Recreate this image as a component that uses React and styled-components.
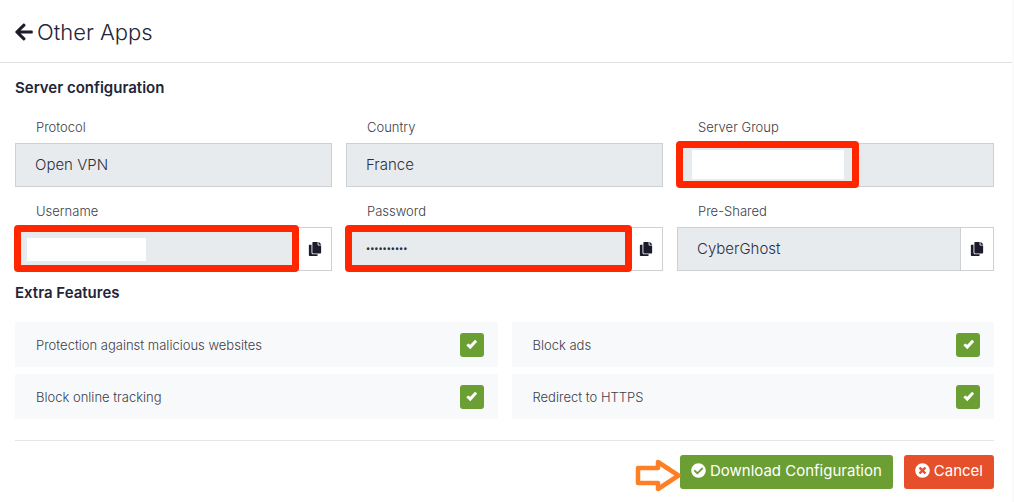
import React from "react";
import styled, { createGlobalStyle } from "styled-components";
import {
  FaArrowLeft,
  FaCheckCircle,
  FaCopy,
  FaTimesCircle,
} from "react-icons/fa";

const GlobalStyle = createGlobalStyle`
  * {
    box-sizing: border-box;
  }
  body {
    margin: 0;
    background-color: #fafafa;
    color: #212537;
    font-family: Inter, "Open Sans", sans-serif;
    font-weight: 300;
  }
`;

const Card = styled.main`
  min-height: 100vh;
  margin-right: 2px;
  background-color: white;
`;

const Header = styled.header`
  display: flex;
  align-items: center;
  gap: 3px;
  padding: 17px 15px 15px 14px;
  border-bottom: 1px solid #dee0e2;

  a {
    display: flex;
    color: #1b1b2b;
    font-size: 20px;
  }
  h1 {
    margin: 0;
    font-size: 22px;
    font-weight: 300;
    line-height: 30px;
  }
`;

const Content = styled.form`
  padding: 15px 18px 0 15px;
`;

const SectionTitle = styled.h2`
  margin: 0;
  font-size: 15px;
  font-weight: 600;
  line-height: 20px;
`;

const FieldGrid = styled.div`
  display: grid;
  grid-template-columns: repeat(3, 1fr);
  column-gap: 14px;
  padding: 5px 0 12px;
`;

const FieldLabel = styled.label`
  display: block;
  padding: 14px 21px 6px;
  font-size: 13px;
  line-height: 20px;
  color: #3c4048;
`;

const Control = styled.div`
  position: relative;
  display: flex;
  height: 44px;
  border: 1px solid #ced1d4;
`;

const TextInput = styled.input`
  flex: 1;
  min-width: 0;
  padding: 0 19px 2px;
  border: 0;
  background-color: #e8ebee;
  color: #2b2f3d;
  font-family: inherit;
  font-size: 15px;
  font-weight: 300;

  &[type="password"] {
    font-family: "Noto Sans", sans-serif;
    font-size: 11px;
    font-weight: 400;
  }
`;

const CopyButton = styled.button`
  display: flex;
  align-items: center;
  justify-content: center;
  width: 33px;
  padding: 0;
  border: 0;
  border-left: 1px solid #ced1d4;
  background-color: white;
  color: #1b1b2b;
  font-size: 14px;
  cursor: pointer;
`;

const Highlight = styled.span`
  position: absolute;
  top: -3px;
  bottom: -2px;
  left: -2px;
  right: ${(props) => props.$right};
  border: 7px solid #ff2600;
  border-radius: 4px;
  pointer-events: none;
`;

const Redaction = styled.span`
  position: absolute;
  top: ${(props) => props.$top};
  left: ${(props) => props.$left};
  width: ${(props) => props.$width};
  height: ${(props) => props.$height};
  background-color: white;
`;

const FeatureGrid = styled.div`
  display: grid;
  grid-template-columns: repeat(2, 1fr);
  gap: 7px 14px;
  padding: 19px 0 21px;
`;

const Feature = styled.label`
  display: flex;
  align-items: center;
  justify-content: space-between;
  height: 45px;
  padding: 0 14px 0 21px;
  background-color: #f8f9fb;
  color: #3c4048;
  font-size: 13px;
`;

const CheckCell = styled.span`
  display: grid;
  place-items: center;

  input,
  svg {
    grid-area: 1 / 1;
  }
  input {
    appearance: none;
    width: 24px;
    height: 24px;
    margin: 0;
    border-radius: 3px;
    background-color: #d5d9dd;
    cursor: pointer;
  }
  input:checked {
    background-color: #6b9f33;
  }
  svg {
    pointer-events: none;
  }
`;

const Footer = styled.footer`
  display: flex;
  justify-content: flex-end;
  gap: 11px;
  padding: 14px 0 13px;
  border-top: 1px solid #e3e5e7;
`;

const DownloadSlot = styled.div`
  position: relative;
`;

const ActionButton = styled.button`
  display: flex;
  align-items: center;
  gap: 4px;
  height: 34px;
  padding: 0 11px 3px;
  border: 0;
  border-radius: 3px;
  background-color: ${(props) => props.$color};
  color: white;
  font-family: Inter, "Open Sans", sans-serif;
  font-size: 15px;
  cursor: pointer;
`;

const Pointer = styled.svg`
  position: absolute;
  top: 3px;
  right: calc(100% - 2px);
  pointer-events: none;
`;

const fields = [
  { id: "protocol", label: "Protocol", value: "Open VPN" },
  { id: "country", label: "Country", value: "France" },
  {
    id: "group",
    label: "Server Group",
    value: "",
    highlight: "134px",
    redaction: { $top: "6px", $left: "14px", $width: "152px", $height: "29px" },
  },
  {
    id: "username",
    label: "Username",
    value: "",
    copy: true,
    highlight: "32px",
    redaction: { $top: "10px", $left: "11px", $width: "119px", $height: "23px" },
  },
  {
    id: "password",
    label: "Password",
    type: "password",
    value: "abcdefghij",
    copy: true,
    highlight: "30px",
  },
  { id: "preshared", label: "Pre-Shared", value: "CyberGhost", copy: true },
];

const features = [
  "Protection against malicious websites",
  "Block ads",
  "Block online tracking",
  "Redirect to HTTPS",
];

function Tick() {
  return (
    <svg width="13" height="13" viewBox="0 0 12 12">
      <path d="M1.200 6.800L3 5L4.800 6.300L9.300 1.500L11.200 3.400L4.900 10.400Z" fill="white" />
    </svg>
  );
}

function Field({ id, label, value, type = "text", copy, highlight, redaction }) {
  return (
    <div>
      <FieldLabel htmlFor={id}>{label}</FieldLabel>
      <Control>
        <TextInput id={id} type={type} value={value} readOnly />
        {copy && (
          <CopyButton type="button" aria-label={`Copy ${label}`}>
            <FaCopy />
          </CopyButton>
        )}
        {redaction && <Redaction {...redaction} />}
        {highlight && <Highlight $right={highlight} />}
      </Control>
    </div>
  );
}

export default function App() {
  return (
    <>
      <GlobalStyle />
      <Card>
        <Header>
          <a href="#back" aria-label="Back">
            <FaArrowLeft />
          </a>
          <h1>Other Apps</h1>
        </Header>
        <Content>
          <SectionTitle>Server configuration</SectionTitle>
          <FieldGrid>
            {fields.map((field) => (
              <Field key={field.id} {...field} />
            ))}
          </FieldGrid>
          <SectionTitle>Extra Features</SectionTitle>
          <FeatureGrid>
            {features.map((name) => (
              <Feature key={name}>
                {name}
                <CheckCell>
                  <input type="checkbox" defaultChecked />
                  <Tick />
                </CheckCell>
              </Feature>
            ))}
          </FeatureGrid>
          <Footer>
            <DownloadSlot>
              <ActionButton type="button" $color="#6b9f33">
                <FaCheckCircle />
                Download Configuration
              </ActionButton>
              <Pointer width="47" height="35" viewBox="0 0 47 35">
                <path
                  d="M3 10H23V4L43.500 17.500L23 31V25H3Z"
                  fill="white"
                  stroke="#ff7f27"
                  strokeWidth="4.500"
                  strokeLinejoin="round"
                />
              </Pointer>
            </DownloadSlot>
            <ActionButton type="button" $color="#e5502b">
              <FaTimesCircle />
              Cancel
            </ActionButton>
          </Footer>
        </Content>
      </Card>
    </>
  );
}
